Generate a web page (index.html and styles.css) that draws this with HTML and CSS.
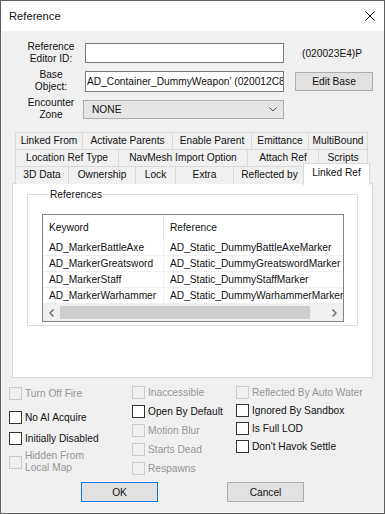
FILE: index.html
```html
<!DOCTYPE html>
<html lang="en">
<head>
  <meta charset="UTF-8">
  <title>Reference</title>
  <link rel="stylesheet" href="styles.css">
</head>
<body>
  <div class="window">
    <div class="titlebar">
      <span>Reference</span>
      <svg class="close" width="10" height="10" viewBox="0 0 10 10"><path d="M0.5 0.5 L9.5 9.5 M9.5 0.5 L0.5 9.5" stroke="#000" stroke-width="1" fill="none"/></svg>
    </div>

    <div class="client">
      <div class="form">
        <div class="lbl">Reference<br>Editor ID:</div>
        <div class="edit id-edit"></div>
        <div class="formid">(020023E4)P</div>

        <div class="lbl">Base<br>Object:</div>
        <div class="edit base-edit">AD_Container_DummyWeapon' (020012C8</div>
        <button class="btn">Edit Base</button>

        <div class="lbl">Encounter<br>Zone</div>
        <div class="combo">
          <span>NONE</span>
          <svg width="8" height="5" viewBox="0 0 8 5"><path d="M0.5 0.5 L4 4 L7.5 0.5" stroke="#555" fill="none"/></svg>
        </div>
        <div></div>
      </div>

      <div class="tabs">
        <div class="tab-row r1">
          <div class="tab">Linked From</div>
          <div class="tab">Activate Parents</div>
          <div class="tab">Enable Parent</div>
          <div class="tab">Emittance</div>
          <div class="tab last">MultiBound</div>
        </div>
        <div class="tab-row r2">
          <div class="tab">Location Ref Type</div>
          <div class="tab">NavMesh Import Option</div>
          <div class="tab">Attach Ref</div>
          <div class="tab last">Scripts</div>
        </div>
        <div class="tab-row r3">
          <div class="tab">3D Data</div>
          <div class="tab">Ownership</div>
          <div class="tab">Lock</div>
          <div class="tab">Extra</div>
          <div class="tab">Reflected by</div>
          <div class="tab active">Linked Ref</div>
        </div>
      </div>

      <div class="page">
        <fieldset class="group">
          <legend>References</legend>
          <div class="list">
            <div class="list-head">
              <div class="cell">Keyword</div>
              <div class="cell">Reference</div>
            </div>
            <div class="list-row">
              <div class="cell">AD_MarkerBattleAxe</div>
              <div class="cell">AD_Static_DummyBattleAxeMarker</div>
            </div>
            <div class="list-row">
              <div class="cell">AD_MarkerGreatsword</div>
              <div class="cell">AD_Static_DummyGreatswordMarker</div>
            </div>
            <div class="list-row">
              <div class="cell">AD_MarkerStaff</div>
              <div class="cell">AD_Static_DummyStaffMarker</div>
            </div>
            <div class="list-row">
              <div class="cell">AD_MarkerWarhammer</div>
              <div class="cell">AD_Static_DummyWarhammerMarker</div>
            </div>
            <div class="hscroll">
              <div class="arrow"><svg width="5" height="8" viewBox="0 0 5 8"><path d="M4.5 0.5 L1 4 L4.5 7.5" stroke="#606060" stroke-width="1.3" fill="none"/></svg></div>
              <div class="track"><div class="thumb"></div></div>
              <div class="arrow"><svg width="5" height="8" viewBox="0 0 5 8"><path d="M0.5 0.5 L4 4 L0.5 7.5" stroke="#606060" stroke-width="1.3" fill="none"/></svg></div>
            </div>
          </div>
        </fieldset>
      </div>

      <div class="checks">
        <div class="col c1">
          <div class="cb off"><span class="box"></span>Turn Off Fire</div>
          <div class="cb noai"><span class="box"></span>No AI Acquire</div>
          <div class="cb init"><span class="box"></span>Initially Disabled</div>
          <div class="cb off hidden-map"><span class="box"></span>Hidden From<br>Local Map</div>
        </div>
        <div class="col c2">
          <div class="cb off"><span class="box"></span>Inaccessible</div>
          <div class="cb"><span class="box"></span>Open By Default</div>
          <div class="cb off"><span class="box"></span>Motion Blur</div>
          <div class="cb off"><span class="box"></span>Starts Dead</div>
          <div class="cb off"><span class="box"></span>Respawns</div>
        </div>
        <div class="col c3">
          <div class="cb off"><span class="box"></span>Reflected By Auto Water</div>
          <div class="cb"><span class="box"></span>Ignored By Sandbox</div>
          <div class="cb"><span class="box"></span>Is Full LOD</div>
          <div class="cb"><span class="box"></span>Don't Havok Settle</div>
        </div>
      </div>

      <div class="buttons">
        <button class="btn default">OK</button>
        <button class="btn">Cancel</button>
      </div>
    </div>
  </div>
</body>
</html>
```

FILE: styles.css
```css
body {
  margin: 0;
  font-family: "Liberation Sans", Arial, sans-serif;
  font-size: 10.2px;
  color: #111;
  overflow: hidden;
}
.window {
  width: 385px;
  height: 514px;
  box-sizing: border-box;
  border: 1px solid #5f5f5f;
  background: #f0f0f0;
}
.titlebar {
  height: 30px;
  background: #fff;
  display: flex;
  align-items: center;
  justify-content: space-between;
  padding: 0 9px 0 8px;
  font-size: 11.2px;
}
.client {
  height: 482px;
}

/* top form */
.form {
  display: grid;
  grid-template-columns: 66px 210px 78px;
  grid-auto-rows: 28px;
  align-items: center;
  padding: 8px 0 0 18px;
}
.lbl {
  width: 64px;
  text-align: center;
  line-height: 12.5px;
}
.edit {
  width: 199px;
  box-sizing: border-box;
  background: #fff;
  border: 1px solid #7a7a7a;
  overflow: hidden;
  white-space: nowrap;
}
.id-edit {
  height: 20px;
}
.base-edit {
  height: 21px;
  line-height: 19px;
  padding-left: 1px;
}
.formid {
  padding-left: 7px;
}
.btn {
  font-family: inherit;
  font-size: inherit;
  color: #111;
  background: #e1e1e1;
  border: 1px solid #adadad;
  padding: 0;
  height: 20px;
}
.form .btn {
  width: 78px;
  height: 19px;
}
.combo {
  width: 201px;
  height: 19px;
  margin-left: -2px;
  box-sizing: border-box;
  border: 1px solid #acacac;
  background: #e5e5e5;
  display: flex;
  align-items: center;
  justify-content: space-between;
  padding: 0 6px 0 8px;
}

/* tab control */
.tabs {
  margin: 9px 0 0 14px;
  width: 353px;
}
.tab-row {
  display: grid;
  height: 17px;
}
.r1 { grid-template-columns: 67px 90px 79px 57px 60px; }
.r2 { grid-template-columns: 103px 129px 71px 50px; }
.r3 { grid-template-columns: 53px 67px 40px 58px 72px 63px; }
.tab {
  box-sizing: border-box;
  border-top: 1px solid #d9d9d9;
  border-left: 1px solid #d9d9d9;
  background: #f0f0f0;
  text-align: center;
  line-height: 16px;
  white-space: nowrap;
}
.tab.last {
  border-right: 1px solid #d9d9d9;
}
.tab.active {
  position: relative;
  z-index: 1;
  margin: -3px -2px -1px;
  background: #fff;
  border-right: 1px solid #d9d9d9;
  line-height: 17px;
  padding-bottom: 4px;
}
.page {
  margin-left: 11px;
  width: 361px;
  height: 195px;
  box-sizing: border-box;
  border: 1px solid #d9d9d9;
  background: #fff;
}

/* group box + list */
.group {
  margin: 5px 0 0 14px;
  width: 330px;
  box-sizing: border-box;
  border: 1px solid #dcdcdc;
  padding: 14px 13px 3px 14px;
}
.group legend {
  margin-left: 7px;
  padding: 0 1px;
}
.list {
  border: 1px solid #828282;
  background: #fff;
}
.list-head,
.list-row {
  display: grid;
  grid-template-columns: 121px 179px;
}
.list-head {
  height: 25px;
  align-items: center;
}
.list-head .cell:first-child {
  border-right: 1px solid #e5e5e5;
  height: 25px;
  line-height: 25px;
}
.list-row {
  height: 16px;
  line-height: 15px;
  box-sizing: border-box;
  border-bottom: 1px solid #f0f0f0;
}
.list-row .cell:first-child {
  border-right: 1px solid #f0f0f0;
}
.cell {
  padding-left: 6px;
  white-space: nowrap;
  overflow: hidden;
}
.hscroll {
  display: flex;
  height: 17px;
  background: #f0f0f0;
}
.arrow {
  width: 17px;
  display: flex;
  align-items: center;
  justify-content: center;
}
.track {
  flex: 1;
  padding: 2px 0;
}
.thumb {
  width: 250px;
  height: 13px;
  background: #cdcdcd;
}

/* check boxes */
.checks {
  display: flex;
  height: 104px;
  box-sizing: border-box;
  padding-left: 8px;
}
.col {
  display: flex;
  flex-direction: column;
}
.c1 { width: 123px; padding-top: 9px; }
.c2 { width: 104px; padding-top: 8px; gap: 6px; }
.c3 { padding-top: 8px; gap: 5px; }
.cb {
  display: flex;
  align-items: center;
  gap: 3px;
  line-height: 13px;
  white-space: nowrap;
}
.box {
  width: 13px;
  height: 13px;
  box-sizing: border-box;
  border: 1px solid #333;
  background: #fff;
  flex: none;
}
.cb.off {
  color: #959595;
}
.cb.off .box {
  border-color: #cccccc;
  background: #f0f0f0;
}
.c1 .noai { margin-top: 11px; }
.c1 .init { margin-top: 8px; }
.c1 .hidden-map { margin-top: 5px; line-height: 12px; }

.buttons {
  display: flex;
  gap: 69px;
  padding-left: 80px;
}
.buttons .btn {
  width: 77px;
}
.btn.default {
  border-color: #0078d7;
}
```
